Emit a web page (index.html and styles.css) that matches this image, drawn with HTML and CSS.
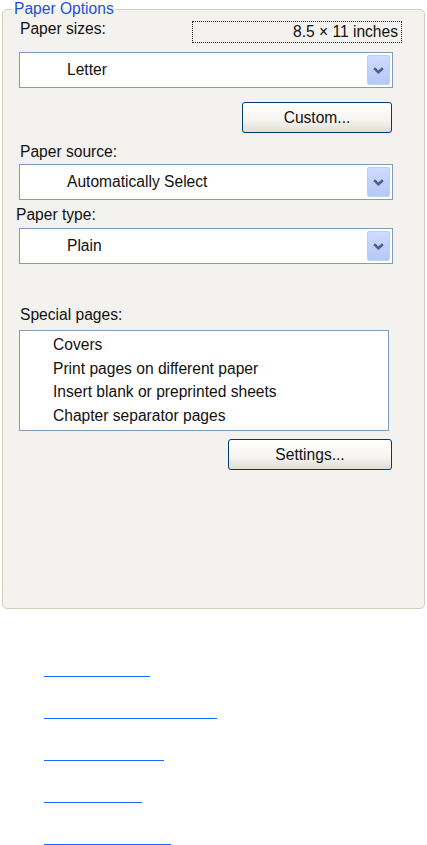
FILE: index.html
```html
<!DOCTYPE html>
<html>
<head>
<meta charset="utf-8">
<link rel="stylesheet" href="styles.css">
</head>
<body>
<div class="panel">
  <span class="legend">Paper Options</span>
  <div class="content">
    <div class="row1">
      <span class="label">Paper sizes:</span>
      <span class="dims">8.5 × 11 inches</span>
    </div>
    <div class="combo c1">
      <span class="combo-text">Letter</span>
      <span class="arrow"><svg width="11" height="7" viewBox="0 0 11 7"><path d="M1.2 1.2 L5.5 5.2 L9.8 1.2" fill="none" stroke="#4d6185" stroke-width="2.6"/></svg></span>
    </div>
    <div class="btn custom">Custom...</div>
    <span class="label source">Paper source:</span>
    <div class="combo c2">
      <span class="combo-text">Automatically Select</span>
      <span class="arrow"><svg width="11" height="7" viewBox="0 0 11 7"><path d="M1.2 1.2 L5.5 5.2 L9.8 1.2" fill="none" stroke="#4d6185" stroke-width="2.6"/></svg></span>
    </div>
    <span class="label type">Paper type:</span>
    <div class="combo c3">
      <span class="combo-text">Plain</span>
      <span class="arrow"><svg width="11" height="7" viewBox="0 0 11 7"><path d="M1.2 1.2 L5.5 5.2 L9.8 1.2" fill="none" stroke="#4d6185" stroke-width="2.6"/></svg></span>
    </div>
    <span class="label special">Special pages:</span>
    <ul class="listbox">
      <li>Covers</li>
      <li>Print pages on different paper</li>
      <li>Insert blank or preprinted sheets</li>
      <li>Chapter separator pages</li>
    </ul>
    <div class="btn settings">Settings...</div>
  </div>
</div>
<div class="links">
  <a class="link l1" href="#"></a>
  <a class="link l2" href="#"></a>
  <a class="link l3" href="#"></a>
  <a class="link l4" href="#"></a>
  <a class="link l5" href="#"></a>
</div>
</body>
</html>
```
FILE: styles.css
```css
html, body {
  margin: 0;
  padding: 0;
  background: #ffffff;
}
body {
  font-family: "Liberation Sans", Arial, sans-serif;
  font-size: 15.6px;
  color: #111;
}
.panel {
  position: relative;
  box-sizing: border-box;
  margin: 9px 0 0 2px;
  width: 423px;
  height: 600px;
  border: 1px solid #d0d0bf;
  border-radius: 5px;
  background: #f3f2ee;
  padding: 10px 0 0 16px;
}
.legend {
  position: absolute;
  top: -10px;
  left: 9px;
  padding: 0 2px;
  line-height: 17px;
  color: #1f4fd8;
  background: linear-gradient(#ffffff 50%, #f3f2ee 50%);
}
.content {
  width: 374px;
  display: flex;
  flex-direction: column;
}
.label {
  display: block;
  line-height: 17px;
  margin-left: 1px;
}
.row1 {
  display: flex;
  align-items: flex-start;
}
.dims {
  box-sizing: border-box;
  margin: 1px -9px 0 auto;
  width: 210px;
  height: 22px;
  border: 1px dotted #222;
  text-align: right;
  padding-right: 3px;
  line-height: 20px;
}
.combo {
  box-sizing: border-box;
  height: 36px;
  border: 1px solid #7f9db9;
  background: #ffffff;
  display: flex;
  align-items: center;
  padding: 2px 2px 2px 47px;
}
.c1 { margin-top: 9px; }
.c2 { margin-top: 4px; }
.c3 { margin-top: 5px; }
.combo-text {
  flex: 1;
}
.arrow {
  box-sizing: border-box;
  width: 23px;
  height: 100%;
  border: 1px solid #bccffa;
  border-radius: 2px;
  background: linear-gradient(#cddbfd, #b4c9f8);
  display: flex;
  align-items: center;
  justify-content: center;
}
.btn {
  box-sizing: border-box;
  height: 31px;
  border: 1px solid #003c74;
  border-radius: 3px;
  background: linear-gradient(#ffffff 0%, #f5f4f0 60%, #e0ddd3 100%);
  display: flex;
  align-items: center;
  justify-content: center;
  align-self: flex-end;
  margin-right: 1px;
}
.custom {
  width: 150px;
  margin-top: 14px;
}
.source { margin-top: 10px; }
.type { margin-top: 6px; margin-left: -3px; }
.special { margin-top: 42px; }
.listbox {
  box-sizing: border-box;
  list-style: none;
  margin: 7px 0 0 0;
  padding: 2px 0 0 33px;
  width: 370px;
  height: 101px;
  border: 1px solid #7f9db9;
  background: #ffffff;
}
.listbox li {
  line-height: 23.5px;
}
.settings {
  width: 164px;
  margin-top: 8px;
}
.links {
  display: flex;
  flex-direction: column;
  padding: 26px 0 0 44px;
}
.link {
  display: block;
  height: 41px;
  border-bottom: 1px solid #1a66ff;
}
.l1 { width: 106px; }
.l2 { width: 173px; }
.l3 { width: 120px; }
.l4 { width: 98px; }
.l5 { width: 127px; }
```
